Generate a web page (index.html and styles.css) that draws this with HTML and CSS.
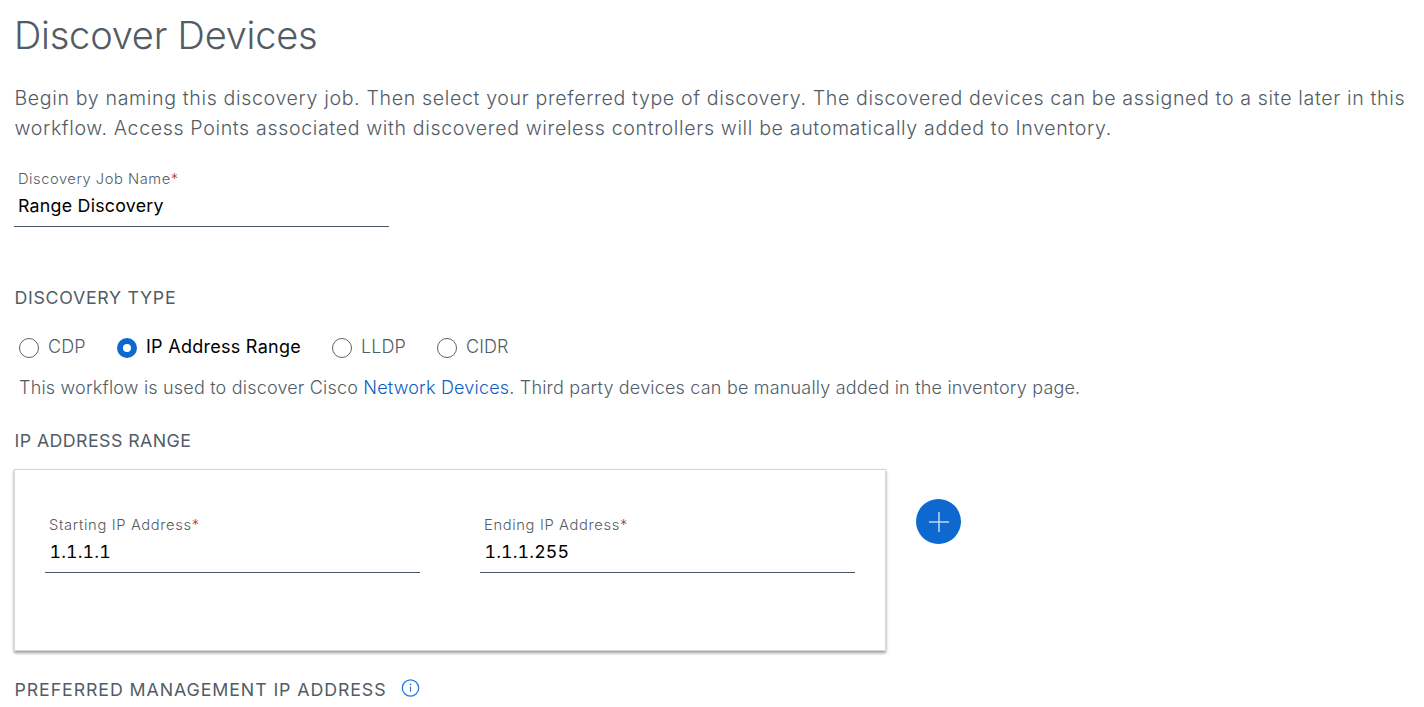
FILE: index.html
```html
<!DOCTYPE html>
<html lang="en">
<head>
<meta charset="utf-8">
<title>Discover Devices</title>
<link rel="stylesheet" href="styles.css">
</head>
<body>
<main class="page">
  <h1 class="title">Discover Devices</h1>
  <p class="intro">Begin by naming this discovery job. Then select your preferred type of discovery. The discovered devices can be assigned to a site later in this<br>workflow. Access Points associated with discovered wireless controllers will be automatically added to Inventory.</p>
  <div class="field field-name">
    <div class="label">Discovery Job Name<span class="req">*</span></div>
    <div class="value">Range Discovery</div>
  </div>
  <h2 class="heading heading-type">DISCOVERY TYPE</h2>
  <div class="radios">
    <div class="option o-cdp"><span class="radio"></span><span>CDP</span></div>
    <div class="option o-range selected"><span class="radio"></span><span>IP Address Range</span></div>
    <div class="option o-lldp"><span class="radio"></span><span>LLDP</span></div>
    <div class="option o-cidr"><span class="radio"></span><span>CIDR</span></div>
  </div>
  <p class="note">This workflow is used to discover Cisco <a class="link">Network Devices</a>. Third party devices can be manually added in the inventory page.</p>
  <h2 class="heading heading-range">IP ADDRESS RANGE</h2>
  <div class="range-row">
    <div class="card">
      <div class="field">
        <div class="label">Starting IP Address<span class="req">*</span></div>
        <div class="value ip">1.1.1.1</div>
      </div>
      <div class="field">
        <div class="label">Ending IP Address<span class="req">*</span></div>
        <div class="value ip">1.1.1.255</div>
      </div>
    </div>
    <div class="add">
      <svg width="45" height="45" viewBox="0 0 45 45"><path d="M13 23h20M23 13v20" stroke="#fff" stroke-opacity=".75" stroke-width="1.5" fill="none"/></svg>
    </div>
  </div>
  <div class="preferred">
    <h2 class="heading heading-pref">PREFERRED MANAGEMENT IP ADDRESS</h2>
    <svg class="info" width="20" height="20" viewBox="0 0 20 20"><circle cx="10.5" cy="10" r="8.2" fill="none" stroke="#1f76dc" stroke-width="1.2"/><path d="M10.5 8.6v5.2" stroke="#1f76dc" stroke-width="1.1"/><circle cx="10.5" cy="6.4" r=".8" fill="#1f76dc"/></svg>
  </div>
</main>
</body>
</html>
```
FILE: styles.css
```css
* { box-sizing: border-box; }
body { margin: 0; background: #fff; color: #525c66; font-family: Inter, "Liberation Sans", sans-serif; font-weight: 300; overflow: hidden; }
.page { height: 707px; padding: 10px 0 0 14px; }
h1, h2, p { margin: 0; font-weight: 300; white-space: nowrap; }
.title { font-size: 38px; line-height: 50px; letter-spacing: -0.23px; }
.intro { margin-top: 23px; padding-left: 0.5px; font-size: 19.6px; line-height: 30px; letter-spacing: 0.635px; }
.field { width: 375px; height: 59px; border-bottom: 1px solid #4b5563; padding-left: 4px; }
.field-name { margin-top: 25px; }
.label { font-size: 14.7px; line-height: 22px; letter-spacing: 0.54px; white-space: nowrap; }
.card .label { letter-spacing: 0.66px; }
.req { color: #b8342c; }
.value { margin-top: 2px; font-size: 17.8px; line-height: 28px; letter-spacing: 0.24px; color: #000; font-weight: 400; white-space: nowrap; }
.ip { padding-left: 0.5px; font-variant-numeric: tabular-nums; font-kerning: none; letter-spacing: 0.12px; }
.heading { padding-left: 0.5px; font-size: 17.8px; line-height: 24px; font-weight: 400; }
.heading-type { margin-top: 59px; letter-spacing: 0.7px; }
.radios { display: flex; height: 22px; margin: 27px 0 0 5px; }
.option { display: flex; gap: 9px; font-size: 18px; line-height: 20px; white-space: nowrap; letter-spacing: 0.1px; }
.radio { width: 20px; height: 20px; margin-top: 1px; border: 1.4px solid #59636d; border-radius: 50%; }
.o-cdp { width: 98px; }
.o-range { width: 215px; }
.o-lldp { width: 105px; }
.selected { color: #000; font-weight: 400; letter-spacing: 0.27px; }
.selected .radio { border: 6px solid #0d68cf; }
.note { margin: 17px 0 0 5px; font-size: 18px; line-height: 24px; letter-spacing: 0.19px; }
.link { color: #0d60c4; }
.heading-range { margin-top: 29px; letter-spacing: 0.42px; }
.range-row { display: flex; gap: 30px; margin-top: 16px; }
.card { display: flex; gap: 60px; width: 872px; height: 182px; padding: 44px 30px 0; border: 1px solid #d5d7d9; box-shadow: 0 2px 3px rgba(0,0,0,.4); }
.add { width: 45px; height: 45px; margin-top: 30px; border-radius: 50%; background: #0d68cf; }
.add svg, .info { display: block; }
.preferred { display: flex; gap: 14px; margin-top: 27px; }
.heading-pref { letter-spacing: 0.9px; }
```
